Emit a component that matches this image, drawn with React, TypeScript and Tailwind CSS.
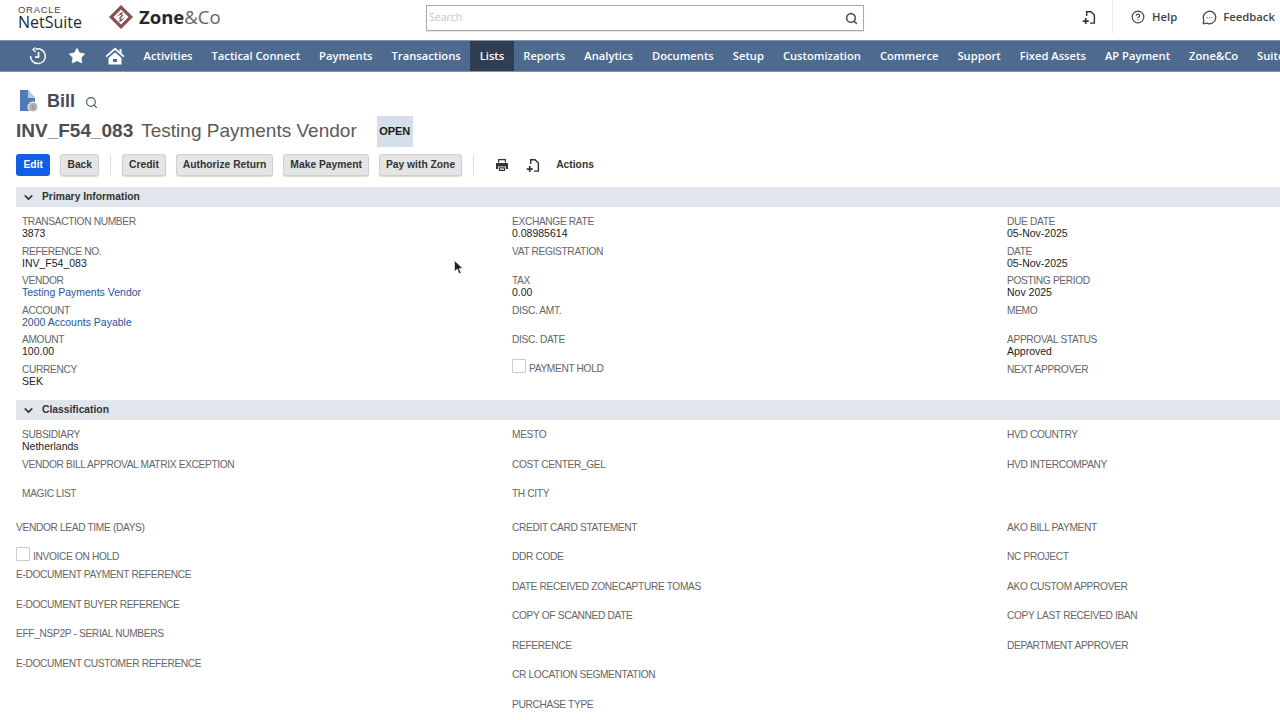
import React from 'react';
import { ChevronDown, Search, Star, CircleHelp, MessageCircleMore } from 'lucide-react';

const navItems = ['Activities', 'Tactical Connect', 'Payments', 'Transactions', 'Lists', 'Reports', 'Analytics', 'Documents', 'Setup', 'Customization', 'Commerce', 'Support', 'Fixed Assets', 'AP Payment', 'Zone&Co', 'SuiteApps'];

const ImportIcon = ({ size = 16, color = '#333' }: { size?: number; color?: string }) => (
  <svg width={size} height={size} viewBox="0 0 16 16" fill="none" stroke={color} strokeWidth="1.5">
    <path d="M5 6.5V1.8h4.6L13.2 5.4V14H8.5" />
    <path d="M0.8 11.8h6.4M4 8.6v6.4" strokeWidth="1.8" />
  </svg>
);

const PrintIcon = () => (
  <svg width="14" height="14" viewBox="0 0 14 14" fill="#333">
    <path d="M3 1h8v3.5H9.8V2.2H4.2v2.3H3z" />
    <path d="M1 5h12v6h-2V8.5H3V11H1z" />
    <path d="M3.8 9.3h6.4V13H3.8zM5 10.5v1.3h4v-1.3z" fillRule="evenodd" />
  </svg>
);

const Field = ({ label, value, link, inset = true }: { label: string; value?: string; link?: boolean; inset?: boolean }) => (
  <div className={`h-[29.5px] pt-px leading-[12px] ${inset ? 'pl-[6px]' : ''}`}>
    <div className="text-[10.2px] tracking-[-0.35px] text-[#666666]">{label}</div>
    {value && <div className={`-mt-px text-[10.5px] ${link ? 'text-[#255599]' : 'text-[#222222]'}`}>{value}</div>}
  </div>
);

const Check = ({ label }: { label: string }) => (
  <div className="flex items-end h-[14px] text-[10.2px] tracking-[-0.35px] leading-[12px] text-[#666666]">
    <span className="w-[14px] h-[14px] border border-[#cccccc] bg-white rounded-[1px] mr-[3px]" />
    <span className="translate-y-[2px]">{label}</span>
  </div>
);

const Btn = ({ children, primary }: { children: string; primary?: boolean }) => (
  <button className={`h-[22px] rounded-[3px] text-[10.3px] font-bold leading-none ${primary ? 'px-[7.5px] bg-[#125ee6] text-white' : 'px-[6px] bg-[#e5e5e5] border border-[#cfcfcf] text-[#333333] shadow-[0_1px_1px_rgba(0,0,0,0.15)]'}`}>
    {children}
  </button>
);

const SectionHead = ({ title }: { title: string }) => (
  <div className="ml-[16px] h-[20px] bg-[#e1e6ed] flex items-center pl-[6px] gap-[7px] text-[10.3px] font-bold text-[#333333]">
    <ChevronDown size={13} strokeWidth={3} />
    <span>{title}</span>
  </div>
);

export default function App() {
  return (
    <div className="w-[1280px] h-[720px] overflow-hidden bg-white font-['Liberation_Sans',Arial,sans-serif] relative">
      {/* top bar */}
      <div className="h-[39px] flex items-center pb-[5px]">
        <div className="ml-[18px] w-[66px] text-[#1f2933]">
          <div className="text-[9.5px] leading-[10px] tracking-[0.7px] text-[#444444]">ORACLE</div>
          <div className="text-[16px] leading-[15px] font-['Open_Sans',sans-serif]">NetSuite</div>
        </div>
        <svg width="26" height="26" viewBox="0 0 26 26" className="ml-[24px]">
          <path d="M13 1 25 13 13 25 1 13Z" fill="#85504f" />
          <path d="M13 5.5 20.5 13 13 20.5 5.5 13Z" fill="#ffffff" />
          <path d="M8.5 13 13 8.5l2.5 0-5 6.5h3.5L17.5 13 13 17.5h-2.5l5-6.5H12Z" fill="#85504f" />
        </svg>
        <div className="ml-[5px] text-[18.5px] leading-none font-['Open_Sans',sans-serif] w-[80px] whitespace-nowrap">
          <span className="font-bold text-[#1f2933]">Zone</span>
          <span className="text-[#666666]">&amp;Co</span>
        </div>
        <div className="ml-[207px] mt-[2px] w-[438px] h-[26px] border border-[#aaaaaa] flex items-center justify-between pl-[2px] pr-[5px] shadow-[0_1px_1px_rgba(0,0,0,0.1)]">
          <span className="text-[10.5px] text-[#c4c4c4] font-['Open_Sans',sans-serif]">Search</span>
          <Search size={13} strokeWidth={3} className="text-[#555555]" />
        </div>
        <div className="ml-[218px] flex"><ImportIcon size={15} /></div>
        <div className="ml-[15px] w-px h-[34px] bg-[#eeeeee]" />
        <CircleHelp size={14} className="ml-[18px] text-[#444444]" />
        <span className="ml-[7px] text-[11.3px] font-semibold text-[#444444] font-['Open_Sans',sans-serif]">Help</span>
        <MessageCircleMore size={15} className="ml-[25px] text-[#444444]" />
        <span className="ml-[6px] text-[11.3px] font-semibold text-[#444444] font-['Open_Sans',sans-serif] whitespace-nowrap">Feedback</span>
      </div>

      {/* nav */}
      <div className="mt-px h-[32px] bg-[#4e6a8f] border-y border-[#7f97b5] flex items-center text-white overflow-hidden font-['Open_Sans',sans-serif] text-[11.2px] font-semibold">
        <svg width="20" height="20" viewBox="0 0 20 20" fill="none" stroke="white" strokeWidth="1.5" className="ml-[28px] shrink-0">
          <path d="M7.5 3.2a7.4 7.4 0 1 1-5 6.8" />
          <path d="M7.5 1.5 5 3.5 7.5 6" strokeWidth="1.3" />
          <path d="M10.5 6v5.2H7" strokeWidth="1.7" />
        </svg>
        <Star size={18} fill="white" strokeWidth={1} className="ml-[20px] shrink-0" />
        <svg width="20" height="20" viewBox="0 0 20 20" fill="white" className="ml-[19px] shrink-0">
          <path d="M10 1.5 0.5 10l1.2 1.3L10 4l8.3 7.3 1.2-1.3-3-2.7V3h-2v2.5z" />
          <path d="M3.5 12 10 6.2 16.5 12v6.5h-13zM8 13v3h4v-3z" fillRule="evenodd" />
        </svg>
        <div className="ml-[9px] flex h-full shrink-0">
          {navItems.map((n) => (
            <div key={n} className={`h-full flex items-center px-[9.5px] whitespace-nowrap ${n === 'Lists' ? 'bg-[#2f3e52]' : ''}`}>{n}</div>
          ))}
        </div>
      </div>

      {/* title */}
      <div className="mt-[17px] ml-[19px] h-[24px] flex items-center text-[#444c55]">
        <svg width="20" height="24" viewBox="0 0 20 24">
          <path d="M1 1h8l7 8v13H1z" fill="#4f7cb8" />
          <path d="M9 1l7 8H9z" fill="#b5c9e0" />
          <circle cx="14" cy="18" r="5" fill="#b9b2a8" stroke="#fff" />
          <path d="M14 15.5v5" stroke="#8d867c" strokeWidth="1" />
        </svg>
        <span className="ml-[8px] text-[18px] font-bold">Bill</span>
        <Search size={13} strokeWidth={2.2} className="ml-[10px] mt-[3px] text-[#4a5a6a]" />
      </div>
      <div className="ml-[16px] mt-[3px] h-[31px] flex items-center">
        <span className="text-[19px] font-bold text-[#4a4f55]">INV_F54_083</span>
        <span className="ml-[8px] text-[19px] text-[#5a5a5a]">Testing Payments Vendor</span>
        <span className="ml-[20px] w-[36px] h-[31px] bg-[#d5dfe9] flex items-center justify-center text-[11px] font-bold text-[#1a1a1a]">OPEN</span>
      </div>

      {/* actions */}
      <div className="ml-[16px] mt-[7px] h-[22px] flex items-center">
        <Btn primary>Edit</Btn>
        <div className="ml-[10px] flex"><Btn>Back</Btn></div>
        <div className="mx-[11px] w-px h-[20px] bg-[#dddddd]" />
        <div className="flex gap-[10px]">
          <Btn>Credit</Btn>
          <Btn>Authorize Return</Btn>
          <Btn>Make Payment</Btn>
          <Btn>Pay with Zone</Btn>
        </div>
        <div className="ml-[11px] w-px h-[20px] bg-[#dddddd]" />
        <div className="ml-[21px] flex"><PrintIcon /></div>
        <div className="ml-[17px] flex"><ImportIcon size={15} /></div>
        <span className="ml-[15px] text-[10.3px] font-bold text-[#333333]">Actions</span>
      </div>

      <div className="mt-[11px]"><SectionHead title="Primary Information" /></div>
      <div className="ml-[16px] mt-[8px] h-[185px] grid grid-cols-[496px_495px_1fr]">
        <div>
          <Field label="TRANSACTION NUMBER" value="3873" />
          <Field label="REFERENCE NO." value="INV_F54_083" />
          <Field label="VENDOR" value="Testing Payments Vendor" link />
          <Field label="ACCOUNT" value="2000 Accounts Payable" link />
          <Field label="AMOUNT" value="100.00" />
          <Field label="CURRENCY" value="SEK" />
        </div>
        <div>
          <Field inset={false} label="EXCHANGE RATE" value="0.08985614" />
          <Field inset={false} label="VAT REGISTRATION" />
          <Field inset={false} label="TAX" value="0.00" />
          <Field inset={false} label="DISC. AMT." />
          <Field inset={false} label="DISC. DATE" />
          <div className="-mt-[4px]"><Check label="PAYMENT HOLD" /></div>
        </div>
        <div>
          <Field inset={false} label="DUE DATE" value="05-Nov-2025" />
          <Field inset={false} label="DATE" value="05-Nov-2025" />
          <Field inset={false} label="POSTING PERIOD" value="Nov 2025" />
          <Field inset={false} label="MEMO" />
          <Field inset={false} label="APPROVAL STATUS" value="Approved" />
          <Field inset={false} label="NEXT APPROVER" />
        </div>
      </div>

      <SectionHead title="Classification" />
      <div className="ml-[16px] mt-[8px] grid grid-cols-[496px_495px_1fr]">
        <div>
          <Field label="SUBSIDIARY" value="Netherlands" />
          <Field label="VENDOR BILL APPROVAL MATRIX EXCEPTION" />
          <Field label="MAGIC LIST" />
          <div className="h-[4px]" />
          <Field inset={false} label="VENDOR LEAD TIME (DAYS)" />
          <div className="h-[18px] -mt-[3px] mb-[3px]"><Check label="INVOICE ON HOLD" /></div>
          <Field inset={false} label="E-DOCUMENT PAYMENT REFERENCE" />
          <Field inset={false} label="E-DOCUMENT BUYER REFERENCE" />
          <Field inset={false} label="EFF_NSP2P - SERIAL NUMBERS" />
          <Field inset={false} label="E-DOCUMENT CUSTOMER REFERENCE" />
        </div>
        <div>
          <Field inset={false} label="MESTO" />
          <Field inset={false} label="COST CENTER_GEL" />
          <Field inset={false} label="TH CITY" />
          <div className="h-[4px]" />
          <Field inset={false} label="CREDIT CARD STATEMENT" />
          <Field inset={false} label="DDR CODE" />
          <Field inset={false} label="DATE RECEIVED ZONECAPTURE TOMAS" />
          <Field inset={false} label="COPY OF SCANNED DATE" />
          <Field inset={false} label="REFERENCE" />
          <Field inset={false} label="CR LOCATION SEGMENTATION" />
          <Field inset={false} label="PURCHASE TYPE" />
        </div>
        <div>
          <Field inset={false} label="HVD COUNTRY" />
          <Field inset={false} label="HVD INTERCOMPANY" />
          <div className="h-[29.5px]" />
          <div className="h-[4px]" />
          <Field inset={false} label="AKO BILL PAYMENT" />
          <Field inset={false} label="NC PROJECT" />
          <Field inset={false} label="AKO CUSTOM APPROVER" />
          <Field inset={false} label="COPY LAST RECEIVED IBAN" />
          <Field inset={false} label="DEPARTMENT APPROVER" />
        </div>
      </div>

      {/* mouse cursor */}
      <svg width="10" height="15" viewBox="0 0 10 15" className="absolute left-[454px] top-[260px]">
        <path d="M0.5 0.5v11l2.8-2.4 1.8 4.6 2-.8-1.9-4.4h3.6z" fill="#222" stroke="#fff" strokeWidth="0.6" />
      </svg>
    </div>
  );
}
